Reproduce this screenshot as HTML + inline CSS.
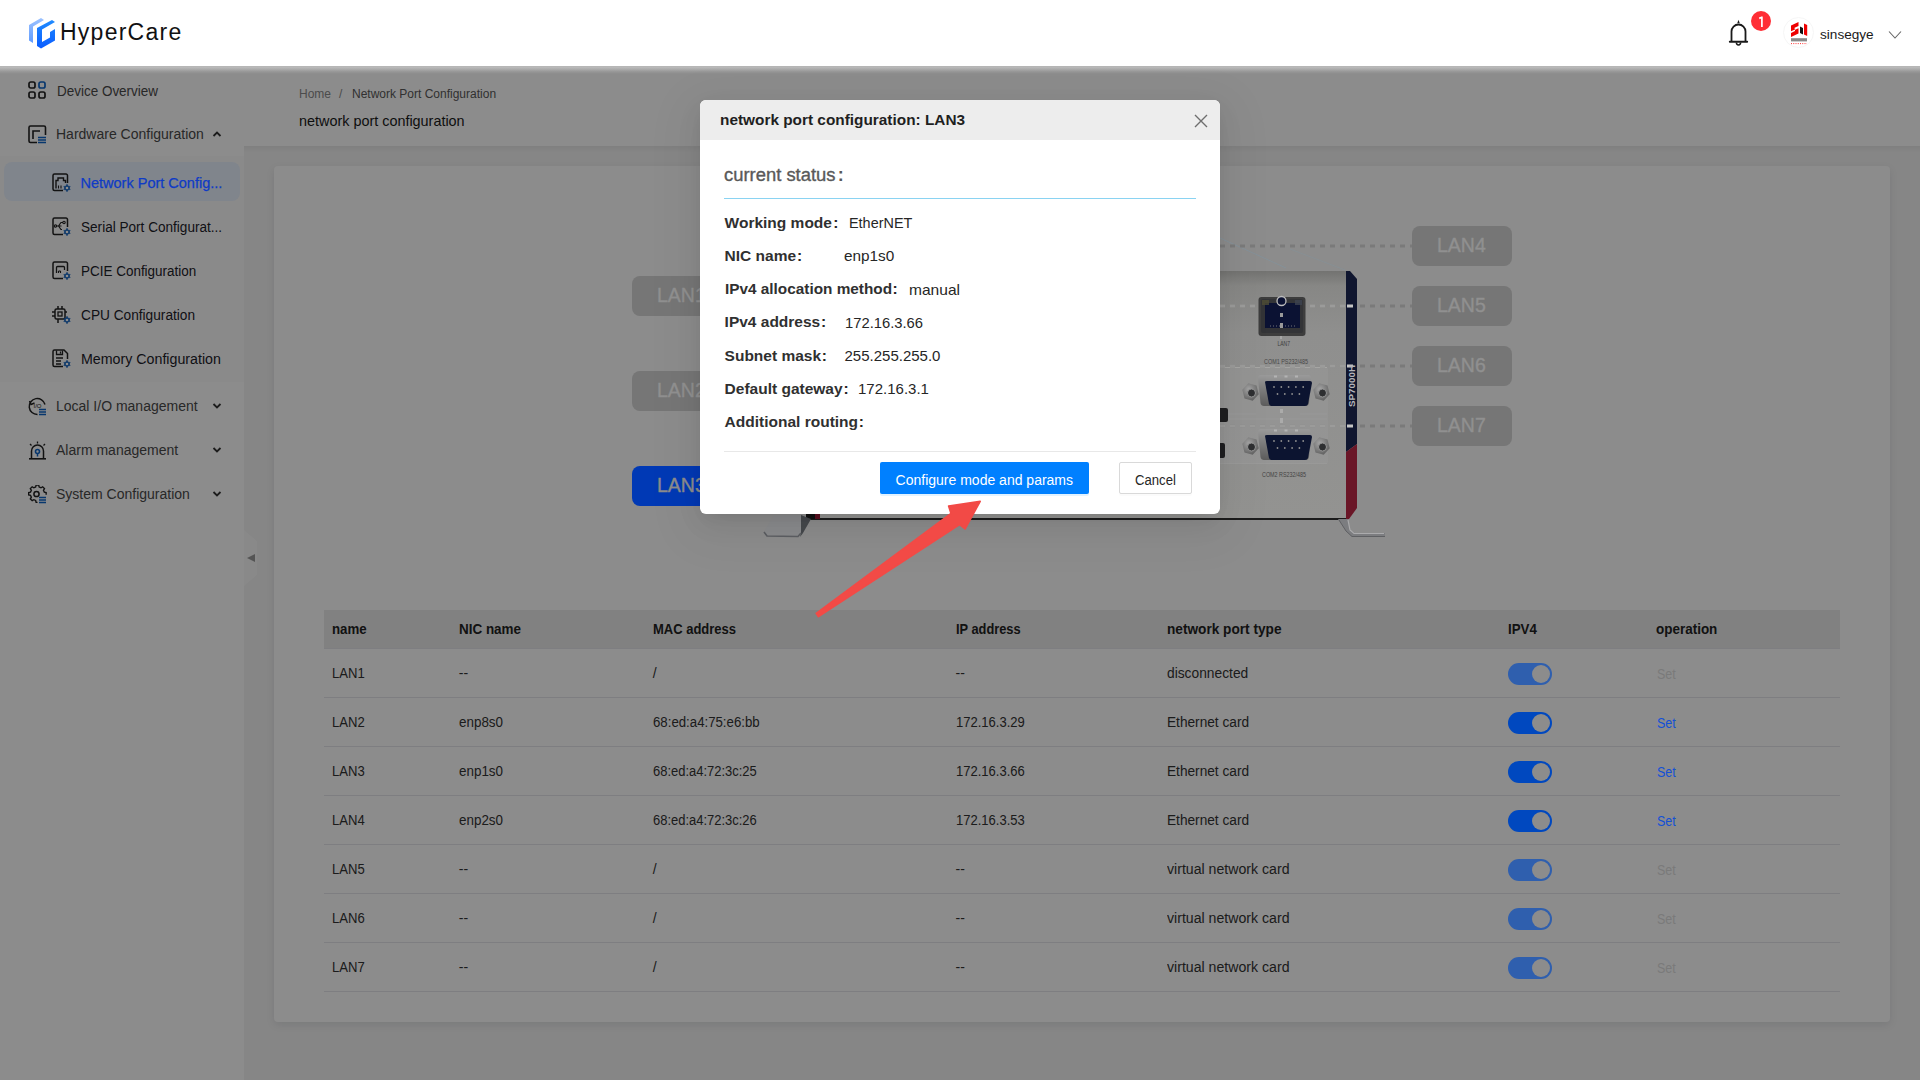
<!DOCTYPE html>
<html>
<head>
<meta charset="utf-8">
<style>
*{margin:0;padding:0;box-sizing:border-box;}
html,body{width:1920px;height:1080px;overflow:hidden;}
body{position:relative;font-family:"Liberation Sans",sans-serif;background:#f4f4f4;color:#303133;}
.abs{position:absolute;}
.t{position:absolute;white-space:nowrap;line-height:1;}
/* header */
#hdr{position:absolute;left:0;top:0;width:1920px;height:66px;background:#fff;z-index:20;}
/* sidebar */
#side{position:absolute;left:0;top:66px;width:244px;height:1014px;background:#fff;}
#sub{position:absolute;left:0;top:156px;width:244px;height:226px;background:#fcfcfc;}
#sel{position:absolute;left:4px;top:162px;width:236px;height:39px;background:#eaf2ff;border-radius:8px;}
.mi{position:absolute;font-size:14px;color:#4a4a4a;white-space:nowrap;line-height:1;}
.si{position:absolute;font-size:14px;color:#1d2129;white-space:nowrap;line-height:1;}
/* page header */
#ph{position:absolute;left:244px;top:66px;width:1676px;height:80px;background:#fff;}
/* card */
#card{position:absolute;left:274px;top:166px;width:1616px;height:856px;background:#fff;border-radius:4px;box-shadow:0 3px 8px rgba(0,20,40,0.09);}
/* table */
.th{position:absolute;font-size:14px;font-weight:700;color:#1d2129;white-space:nowrap;line-height:1;}
.td{position:absolute;font-size:14px;color:#1d2129;white-space:nowrap;line-height:1;}
.rowline{position:absolute;left:324px;width:1516px;height:1px;background:#e5e6eb;}
.tog{position:absolute;width:44px;height:22px;border-radius:11px;background:#165dff;}
.tog::after{content:"";position:absolute;right:2px;top:2px;width:18px;height:18px;border-radius:50%;background:#fff;}
.tog.dis{background:#6b98ff;}
.set{position:absolute;font-size:14px;color:#165dff;line-height:1;}
.set.dis{color:#c9cdd4;}
/* mask */
#mask{position:absolute;left:0;top:66px;width:1920px;height:1014px;background:rgba(0,0,0,0.45);z-index:10;}
/* modal */
#modal{position:absolute;left:700px;top:100px;width:520px;height:414px;background:#fff;border-radius:6px;z-index:30;overflow:hidden;box-shadow:0 6px 16px -8px rgba(0,0,0,0.1),0 9px 28px rgba(0,0,0,0.06),0 12px 48px 16px rgba(0,0,0,0.04);}
#mh{position:absolute;left:0;top:0;width:520px;height:40px;background:#ededed;}
.lb{position:absolute;font-size:15.5px;font-weight:700;color:#262626;white-space:nowrap;line-height:1;}
.vl{position:absolute;font-size:15px;color:#262626;white-space:nowrap;line-height:1;}
</style>
</head>
<body>
<!-- HEADER -->
<div id="hdr">
  <svg class="abs" style="left:28px;top:17px" width="28" height="32" viewBox="0 0 28 32">
    <defs>
      <linearGradient id="lg1" x1="0" y1="0" x2="0" y2="1"><stop offset="0" stop-color="#9cc2ff"/><stop offset="1" stop-color="#5f9bff"/></linearGradient>
      <linearGradient id="lg2" x1="0" y1="0" x2="0" y2="1"><stop offset="0" stop-color="#1f8bff"/><stop offset="1" stop-color="#0a5cff"/></linearGradient>
    </defs>
    <polygon points="1,8 13,1 16,3 5,9.5 5,26 1,23.5" fill="url(#lg1)"/>
    <polygon points="9,11 24,3 27,5 14,12.5 14,25 22,20.5 22,15 27,12 27,23.5 13,31.5 9,29" fill="url(#lg2)"/>
  </svg>
  <div class="t" style="left:60px;top:20.5px;font-size:23px;letter-spacing:1.25px;color:#111;">HyperCare</div>
  <svg class="abs" style="left:1728px;top:19px" width="22" height="28" viewBox="0 0 22 28" fill="none">
    <path d="M9.2 4.2L10.5 0.8L11.8 4.2Z" fill="#1a1a1a"/>
    <path d="M3.5 22.5V12.5a7 7 0 0 1 14 0V22.5" stroke="#1a1a1a" stroke-width="1.8"/>
    <path d="M1.8 22.8h17.4" stroke="#1a1a1a" stroke-width="1.9" stroke-linecap="round"/>
    <path d="M8.4 23.6a2.1 2.4 0 0 0 4.2 0" stroke="#1a1a1a" stroke-width="1.5"/>
  </svg>
  <div class="abs" style="left:1751px;top:11px;width:20px;height:20px;border-radius:50%;background:#ff2e35;"></div>
  <svg class="abs" style="left:1751px;top:11px" width="20" height="20" viewBox="0 0 20 20"><path d="M8.2 7.4L10.9 6.2V15.9" stroke="#fff" stroke-width="1.7" fill="none" stroke-linejoin="round"/></svg>
  <div class="abs" style="left:1783px;top:17px;width:31px;height:31px;border-radius:50%;border:1px solid #f6f6f6;background:#fff;"></div>
  <svg class="abs" style="left:1783px;top:17px" width="32" height="32" viewBox="1783 17 32 32">
    <path d="M1791 25.5L1798.5 22V26L1794.6 27.8V30L1798.5 28.2V33.5L1791 37V33L1795 31.1V29.4L1791 31.3Z" fill="#ee0000"/>
    <path d="M1800 26.5L1803 28V34.6L1800 33Z" fill="#111"/>
    <path d="M1804 23.5L1807.2 25V36L1804 34.5Z" fill="#ee0000"/>
    <rect x="1791" y="38.2" width="16" height="3.2" fill="#555" opacity="0.7"/>
    <path d="M1791 43.6H1807" stroke="#f33" stroke-width="1" stroke-dasharray="1 1.25"/>
  </svg>
  <div class="t" style="left:1820px;top:28px;font-size:13.6px;color:#1a1a1a;">sinsegye</div>
  <svg class="abs" style="left:1888px;top:30px" width="14" height="10" viewBox="0 0 14 10" fill="none"><path d="M1 1.5L7 8L13 1.5" stroke="#666" stroke-width="1.1"/></svg>
</div>
<div class="abs" style="left:0;top:66px;width:1920px;height:8px;z-index:21;background:linear-gradient(to bottom,rgba(255,255,255,0.36) 0%,rgba(255,255,255,0.38) 20%,rgba(255,255,255,0.1) 70%,rgba(255,255,255,0));"></div>

<!-- SIDEBAR -->
<div id="side"></div>
<div id="sub"></div>
<div id="sel"></div>
<!-- icons top-level -->
<svg class="abs" style="left:28px;top:81px" width="18" height="18" viewBox="0 0 18 18" fill="none" stroke-width="1.7">
  <rect x="1" y="1" width="6" height="6" rx="1.8" stroke="#222"/>
  <rect x="11" y="1" width="6" height="6" rx="1.8" stroke="#0e64c8"/>
  <rect x="1" y="11" width="6" height="6" rx="1.8" stroke="#222"/>
  <rect x="11" y="11" width="6" height="6" rx="1.8" stroke="#222"/>
</svg>
<div class="mi" style="left:56.5px;top:83.5px;transform:scaleX(0.962);transform-origin:0 0;">Device Overview</div>

<svg class="abs" style="left:28px;top:125px" width="19" height="19" viewBox="0 0 19 19" fill="none" stroke-width="1.6">
  <path d="M9 17.5H2.5a1.5 1.5 0 0 1-1.5-1.5V2.5A1.5 1.5 0 0 1 2.5 1H16a1.5 1.5 0 0 1 1.5 1.5V10" stroke="#222"/>
  <path d="M5 14V6h7" stroke="#222"/>
  <path d="M10 12.5h8M10 15h8M10 17.5h8" stroke="#0e64c8" stroke-width="1.3"/>
</svg>
<div class="mi" style="left:56px;top:127px;">Hardware Configuration</div>
<svg class="abs" style="left:212px;top:130px" width="10" height="8" viewBox="0 0 10 8" fill="none"><path d="M1.5 6L5 2.5L8.5 6" stroke="#333" stroke-width="1.8"/></svg>

<!-- sub icons -->
<svg class="abs" style="left:52px;top:173px" width="19" height="19" viewBox="0 0 19 19" fill="none" stroke-width="1.5">
  <path d="M11 17.5H2.5a1.5 1.5 0 0 1-1.5-1.5V2.5A1.5 1.5 0 0 1 2.5 1H14a1.5 1.5 0 0 1 1.5 1.5V10" stroke="#222"/>
  <path d="M4 15.5V7.5h2V5h5.5v2.5h2V10" stroke="#222" stroke-width="1.4"/>
  <path d="M6.5 15.5v-3M9 15.5v-3" stroke="#222" stroke-width="1.1"/>
  <path d="M15 11.2L18.2 16.6H11.8Z M15 18.8L11.8 13.4H18.2Z" fill="#1565c0" stroke="#1565c0" stroke-width="0.6" stroke-linejoin="round"/><circle cx="15" cy="15" r="1.3" fill="#fff"/>
</svg>
<div class="si" style="left:80.5px;top:175.5px;color:#0e3bc6;font-size:14.5px;z-index:11;-webkit-text-stroke:0.25px #0e3bc6;">Network Port Config...</div>

<svg class="abs" style="left:52px;top:217px" width="19" height="19" viewBox="0 0 19 19" fill="none" stroke-width="1.5">
  <path d="M11 17.5H2.5a1.5 1.5 0 0 1-1.5-1.5V2.5A1.5 1.5 0 0 1 2.5 1H14a1.5 1.5 0 0 1 1.5 1.5V10" stroke="#222"/>
  <path d="M3.5 9h6M6.5 9l2.5-3.5h2M6.5 9l2.5 3.5h1" stroke="#222" stroke-width="1.2"/>
  <circle cx="3.5" cy="9" r="1.2" stroke="#222" stroke-width="1.1"/><circle cx="12" cy="5.5" r="1.2" stroke="#222" stroke-width="1.1"/>
  <path d="M15 11.2L18.2 16.6H11.8Z M15 18.8L11.8 13.4H18.2Z" fill="#1565c0" stroke="#1565c0" stroke-width="0.6" stroke-linejoin="round"/><circle cx="15" cy="15" r="1.3" fill="#fff"/>
</svg>
<div class="si" style="left:80.5px;top:220px;transform:scaleX(0.97);transform-origin:0 0;">Serial Port Configurat...</div>

<svg class="abs" style="left:52px;top:261px" width="19" height="19" viewBox="0 0 19 19" fill="none" stroke-width="1.5">
  <path d="M11 17.5H2.5a1.5 1.5 0 0 1-1.5-1.5V2.5A1.5 1.5 0 0 1 2.5 1H14a1.5 1.5 0 0 1 1.5 1.5V10" stroke="#222"/>
  <path d="M4.5 12V6.5a1 1 0 0 1 1-1h6a1 1 0 0 1 1 1V9" stroke="#222" stroke-width="1.3"/>
  <path d="M6.5 10v2M8.5 10v2M6.5 10h2" stroke="#222" stroke-width="1.1"/>
  <path d="M15 11.2L18.2 16.6H11.8Z M15 18.8L11.8 13.4H18.2Z" fill="#1565c0" stroke="#1565c0" stroke-width="0.6" stroke-linejoin="round"/><circle cx="15" cy="15" r="1.3" fill="#fff"/>
</svg>
<div class="si" style="left:80.5px;top:264px;transform:scaleX(0.962);transform-origin:0 0;">PCIE Configuration</div>

<svg class="abs" style="left:51px;top:305px" width="20" height="19" viewBox="0 0 20 19" fill="none" stroke-width="1.5">
  <rect x="4" y="4" width="10" height="10" rx="1.5" stroke="#222"/>
  <rect x="7" y="7" width="4" height="4" stroke="#222" stroke-width="1.3"/>
  <path d="M7 1v3M11 1v3M7 14v4M1 7h3M1 11h3M14 7h2" stroke="#222"/>
  <path d="M16 11.2L19.2 16.6H12.8Z M16 18.8L12.8 13.4H19.2Z" fill="#1565c0" stroke="#1565c0" stroke-width="0.6" stroke-linejoin="round"/><circle cx="16" cy="15" r="1.3" fill="#fff"/>
</svg>
<div class="si" style="left:80.5px;top:308px;transform:scaleX(0.977);transform-origin:0 0;">CPU Configuration</div>

<svg class="abs" style="left:52px;top:349px" width="19" height="19" viewBox="0 0 19 19" fill="none" stroke-width="1.5">
  <path d="M11 17.5H2.5a1.5 1.5 0 0 1-1.5-1.5V2.5A1.5 1.5 0 0 1 2.5 1H12l3.5 3.5V10" stroke="#222"/>
  <path d="M4.5 1.5v4h6v-4M8.5 2.5v2M4 9h7M4 12h5M4 15h5" stroke="#222" stroke-width="1.3"/>
  <path d="M15 11.2L18.2 16.6H11.8Z M15 18.8L11.8 13.4H18.2Z" fill="#1565c0" stroke="#1565c0" stroke-width="0.6" stroke-linejoin="round"/><circle cx="15" cy="15" r="1.3" fill="#fff"/>
</svg>
<div class="si" style="left:80.5px;top:352px;transform:scaleX(1.016);transform-origin:0 0;">Memory Configuration</div>

<!-- more top-level -->
<svg class="abs" style="left:28px;top:397px" width="19" height="19" viewBox="0 0 19 19" fill="none" stroke-width="1.5">
  <path d="M17 7.5A8 8 0 1 0 9.5 17.5" stroke="#222"/>
  <path d="M1.5 4l1.5 3.5L6.5 6" stroke="#222" stroke-width="1.4"/>
  <text x="5.5" y="10.5" font-size="6" font-family="Liberation Sans" fill="#222">I/O</text>
  <path d="M11 12.5h7M11 15h7M11 17.5h7" stroke="#0e64c8" stroke-width="1.3"/>
</svg>
<div class="mi" style="left:56px;top:399px;">Local I/O management</div>
<svg class="abs" style="left:212px;top:402px" width="10" height="8" viewBox="0 0 10 8" fill="none"><path d="M1.5 2L5 5.5L8.5 2" stroke="#333" stroke-width="1.8"/></svg>

<svg class="abs" style="left:28px;top:441px" width="19" height="19" viewBox="0 0 19 19" fill="none" stroke-width="1.5">
  <path d="M3.5 17.5V10a6 6 0 0 1 12 0v7.5" stroke="#222"/>
  <path d="M1 17.8h17" stroke="#222" stroke-width="1.6"/>
  <path d="M9.5 0.5v2M2 3l1.5 1.5M17 3l-1.5 1.5" stroke="#222" stroke-width="1.3"/>
  <circle cx="9.5" cy="10.5" r="2" stroke="#0e64c8" stroke-width="1.6"/>
  <path d="M9.5 12.5v3" stroke="#0e64c8" stroke-width="1.5"/>
</svg>
<div class="mi" style="left:56px;top:443px;">Alarm management</div>
<svg class="abs" style="left:212px;top:446px" width="10" height="8" viewBox="0 0 10 8" fill="none"><path d="M1.5 2L5 5.5L8.5 2" stroke="#333" stroke-width="1.8"/></svg>

<svg class="abs" style="left:28px;top:485px" width="19" height="19" viewBox="0 0 19 19" fill="none" stroke-width="1.5">
  <path d="M10 17.2a8 8 0 0 1-1.5 0l-.5-2-2-.9-1.8 1.1-2-2 1.1-1.8-.9-2-2-.5V6.6l2-.5.9-2L2.2 2.3l2-2 1.8 1.1 2-.9.5-2h2.8l.5 2 2 .9 1.8-1.1 2 2-1.1 1.8.9 2 2 .5V9" stroke="#222" transform="translate(0.3,1.5) scale(0.92)"/>
  <circle cx="8.5" cy="9" r="2.6" stroke="#222"/>
  <path d="M11 12.5h7M11 15h7M11 17.5h7" stroke="#0e64c8" stroke-width="1.3"/>
</svg>
<div class="mi" style="left:56px;top:487px;">System Configuration</div>
<svg class="abs" style="left:212px;top:490px" width="10" height="8" viewBox="0 0 10 8" fill="none"><path d="M1.5 2L5 5.5L8.5 2" stroke="#333" stroke-width="1.8"/></svg>

<!-- collapse trigger -->
<div class="abs" style="left:244px;top:530px;width:13px;height:56px;background:rgba(255,255,255,0.5);clip-path:polygon(0 0,100% 20%,100% 80%,0 100%);"></div>
<div class="abs" style="left:247px;top:554px;width:0;height:0;border-top:4px solid transparent;border-bottom:4px solid transparent;border-right:8px solid #9a9a9a;"></div>

<!-- PAGE HEADER -->
<div id="ph"></div>
<div class="abs" style="left:244px;top:146px;width:1676px;height:6px;background:linear-gradient(to bottom,rgba(0,0,0,0.05),rgba(0,0,0,0));"></div>
<div class="t" style="left:299px;top:88px;font-size:12px;color:#8a8a8a;">Home</div>
<div class="t" style="left:339px;top:88px;font-size:12px;color:#8a8a8a;">/</div>
<div class="t" style="left:352px;top:88px;font-size:12px;color:#595959;">Network Port Configuration</div>
<div class="t" style="left:299px;top:114px;font-size:14.4px;color:#1a1a1a;">network port configuration</div>

<!-- CARD -->
<div id="card"></div>
<svg class="abs" style="left:0;top:0;z-index:11" width="1920" height="1080" viewBox="0 0 1920 1080">
<defs>
<linearGradient id="pnl" x1="0" y1="0" x2="0" y2="1">
 <stop offset="0" stop-color="#737371"/><stop offset="0.06" stop-color="#878785"/><stop offset="0.25" stop-color="#8f8f8e"/><stop offset="1" stop-color="#939391"/>
</linearGradient>
<linearGradient id="shell" x1="0" y1="0" x2="0" y2="1"><stop offset="0" stop-color="#9a9a9a"/><stop offset="1" stop-color="#5c5c5c"/></linearGradient>
<radialGradient id="hex" cx="0.4" cy="0.35" r="0.7"><stop offset="0" stop-color="#a5a5a5"/><stop offset="1" stop-color="#5e5e5e"/></radialGradient>
</defs>
<path d="M1220 238 L1286 268" stroke="#7f97a6" stroke-width="0.8" opacity="0.6"/>
<path d="M1290 249 L1345 270" stroke="#7f97a6" stroke-width="0.6" opacity="0.5"/>
<rect x="808" y="271" width="538" height="248" fill="url(#pnl)"/>
<rect x="1180" y="367" width="148" height="97" rx="2" fill="#9a9a98" opacity="0.45"/>
<path d="M1180 367.5 H1327" stroke="#a6a6a4" stroke-width="1"/>
<path d="M1228 414 H1256 M1300 414 H1327 M1228 419 H1327" stroke="#a0a09e" stroke-width="0.8" opacity="0.6"/>
<path d="M1180 463.5 H1327" stroke="#9c9c9a" stroke-width="1" opacity="0.7"/>
<path d="M1220 246 H1412" stroke="#7a7a7a" stroke-width="3" stroke-dasharray="5 5"/>
<path d="M1220 306 H1412" stroke="#7a7a7a" stroke-width="3" stroke-dasharray="5 5"/>
<path d="M1220 366 H1412" stroke="#7a7a7a" stroke-width="3" stroke-dasharray="5 5"/>
<path d="M1220 426 H1412" stroke="#7a7a7a" stroke-width="3" stroke-dasharray="5 5"/>
<path d="M1220 306 H1346" stroke="#aaaaa8" stroke-width="3" stroke-dasharray="5 5" opacity="0.7"/>
<path d="M1220 366 H1346" stroke="#aaaaa8" stroke-width="3" stroke-dasharray="5 5" opacity="0.7"/>
<path d="M1220 426 H1346" stroke="#aaaaa8" stroke-width="3" stroke-dasharray="5 5" opacity="0.7"/>
<rect x="1280" y="409" width="3" height="4" fill="#b0b0b0" opacity="0.8"/>
<rect x="1280" y="418" width="3" height="5" fill="#b0b0b0" opacity="0.8"/>
<rect x="1280" y="336" width="2" height="3" fill="#b0b0b0" opacity="0.7"/>
<path d="M1346 271 L1350 271 L1357 279 L1357 444 L1346 452 Z" fill="#10162f"/>
<path d="M1346 452 L1357 444 L1357 508 L1349 519 L1346 519 Z" fill="#6a1627"/>
<rect x="1347" y="304.5" width="6" height="3" fill="#c4c4c4"/>
<rect x="1347" y="364.5" width="6" height="3" fill="#c4c4c4"/>
<rect x="1347" y="424.5" width="6" height="3" fill="#c4c4c4"/>
<text transform="translate(1355,407) rotate(-90)" font-family="Liberation Sans" font-weight="700" font-size="9" fill="#b5b5ba" textLength="42" lengthAdjust="spacingAndGlyphs">SP7000H</text>
<rect x="806" y="518" width="540" height="2" fill="#1c1c1c"/>
<rect x="806" y="514" width="12" height="5" fill="#121212"/>
<rect x="815" y="514" width="5" height="5" fill="#5a1020"/>
<path d="M774 515 L801 514.5 L801 533 L798 537 L767 537 L764 532 Z" fill="#8a8b8d"/>
<path d="M801 515 L811 519 L803 533 L800 537 L801 533 Z" fill="#45484c"/>
<path d="M764 532 L767 536 L798 536.5 L801 533" stroke="#5c5e62" stroke-width="1.6" fill="none"/>
<path d="M1338 519 L1348 519 L1350 530 L1355 533 L1385 533 L1385 537 L1352 537 L1346 531 Z" fill="#7c7d80"/>
<path d="M1348 520 L1350 530 L1354 533.5 L1384 533.5" stroke="#ababad" stroke-width="1.2" fill="none"/>
<path d="M1339 520 L1346 531 L1352 536.5 L1385 536.5" stroke="#5f6063" stroke-width="1" fill="none"/>
<rect x="1258.5" y="297" width="47" height="39" rx="3" fill="#3d3d3d"/>
<rect x="1261" y="299" width="42" height="34" rx="2" fill="#333437"/>
<rect x="1265" y="303" width="35" height="25" fill="#0b1233"/>
<rect x="1262" y="300" width="7" height="5" fill="#4f4d34" opacity="0.8"/>
<rect x="1295" y="300" width="7" height="5" fill="#3d4350" opacity="0.8"/>
<circle cx="1281.5" cy="301" r="4.5" fill="#0b1233" stroke="#bdbdbd" stroke-width="1.3"/>
<rect x="1280" y="313" width="3" height="4" fill="#9a9a9a"/>
<path d="M1270 326 H1296" stroke="#8a8a8a" stroke-width="0.8" stroke-dasharray="1 2"/>
<rect x="1280" y="323" width="3" height="5" fill="#9a9a9a"/>
<text x="1277.5" y="346" font-family="Liberation Sans" font-size="6.5" fill="#3e3e3e" textLength="12.5" lengthAdjust="spacingAndGlyphs">LAN7</text>
<text x="1264" y="363.5" font-family="Liberation Sans" font-size="6.5" fill="#484848" textLength="44" lengthAdjust="spacingAndGlyphs">COM1 PS232/485</text>
<text x="1262" y="476.5" font-family="Liberation Sans" font-size="6.5" fill="#444" textLength="44" lengthAdjust="spacingAndGlyphs">COM2 RS232/485</text>
<path d="M1258 378 Q1258 375 1261 375 H1308 Q1311 375 1311 378 L1309 403 Q1308.5 406 1305 406 H1264 Q1261 406 1260.5 403 Z" fill="url(#shell)"/>
<path d="M1265 382 Q1265 381 1267 381 H1310 Q1312 381 1312 383 L1308 404 Q1307.5 406 1305 406 H1272 Q1269.5 406 1269 404 Z" fill="#0c1430"/>
<rect x="1274.0" y="375.5" width="3" height="2" fill="#c0c0c0" opacity="0.7"/>
<rect x="1284.5" y="375.5" width="3" height="2" fill="#c0c0c0" opacity="0.7"/>
<rect x="1295.0" y="375.5" width="3" height="2" fill="#c0c0c0" opacity="0.7"/>
<circle cx="1274.0" cy="387" r="0.9" fill="#8f8f8f"/>
<circle cx="1281.3" cy="387" r="0.9" fill="#8f8f8f"/>
<circle cx="1288.6" cy="387" r="0.9" fill="#8f8f8f"/>
<circle cx="1295.9" cy="387" r="0.9" fill="#8f8f8f"/>
<circle cx="1303.2" cy="387" r="0.9" fill="#8f8f8f"/>
<circle cx="1277.5" cy="394" r="0.9" fill="#8f8f8f"/>
<circle cx="1284.8" cy="394" r="0.9" fill="#8f8f8f"/>
<circle cx="1292.1" cy="394" r="0.9" fill="#8f8f8f"/>
<circle cx="1299.4" cy="394" r="0.9" fill="#8f8f8f"/>
<polygon points="1258.7,394.3 1252.7,400.7 1244.5,398.4 1242.3,389.7 1248.3,383.3 1256.5,385.6" fill="url(#hex)"/>
<circle cx="1251.5" cy="393" r="4" fill="#2e2f31"/>
<circle cx="1251.5" cy="393" r="4" fill="none" stroke="#9c9c9c" stroke-width="0.9"/>
<polygon points="1329.7,394.3 1323.7,400.7 1315.5,398.4 1313.3,389.7 1319.3,383.3 1327.5,385.6" fill="url(#hex)"/>
<circle cx="1322.5" cy="393" r="4" fill="#2e2f31"/>
<circle cx="1322.5" cy="393" r="4" fill="none" stroke="#9c9c9c" stroke-width="0.9"/>
<path d="M1258 432 Q1258 429 1261 429 H1308 Q1311 429 1311 432 L1309 457 Q1308.5 460 1305 460 H1264 Q1261 460 1260.5 457 Z" fill="url(#shell)"/>
<path d="M1265 436 Q1265 435 1267 435 H1310 Q1312 435 1312 437 L1308 458 Q1307.5 460 1305 460 H1272 Q1269.5 460 1269 458 Z" fill="#0c1430"/>
<rect x="1274.0" y="429.5" width="3" height="2" fill="#c0c0c0" opacity="0.7"/>
<rect x="1284.5" y="429.5" width="3" height="2" fill="#c0c0c0" opacity="0.7"/>
<rect x="1295.0" y="429.5" width="3" height="2" fill="#c0c0c0" opacity="0.7"/>
<circle cx="1274.0" cy="441" r="0.9" fill="#8f8f8f"/>
<circle cx="1281.3" cy="441" r="0.9" fill="#8f8f8f"/>
<circle cx="1288.6" cy="441" r="0.9" fill="#8f8f8f"/>
<circle cx="1295.9" cy="441" r="0.9" fill="#8f8f8f"/>
<circle cx="1303.2" cy="441" r="0.9" fill="#8f8f8f"/>
<circle cx="1277.5" cy="448" r="0.9" fill="#8f8f8f"/>
<circle cx="1284.8" cy="448" r="0.9" fill="#8f8f8f"/>
<circle cx="1292.1" cy="448" r="0.9" fill="#8f8f8f"/>
<circle cx="1299.4" cy="448" r="0.9" fill="#8f8f8f"/>
<polygon points="1258.7,448.3 1252.7,454.7 1244.5,452.4 1242.3,443.7 1248.3,437.3 1256.5,439.6" fill="url(#hex)"/>
<circle cx="1251.5" cy="447" r="4" fill="#2e2f31"/>
<circle cx="1251.5" cy="447" r="4" fill="none" stroke="#9c9c9c" stroke-width="0.9"/>
<polygon points="1329.7,448.3 1323.7,454.7 1315.5,452.4 1313.3,443.7 1319.3,437.3 1327.5,439.6" fill="url(#hex)"/>
<circle cx="1322.5" cy="447" r="4" fill="#2e2f31"/>
<circle cx="1322.5" cy="447" r="4" fill="none" stroke="#9c9c9c" stroke-width="0.9"/>
<rect x="1216" y="408" width="12" height="14" rx="2" fill="#1e1e20"/>
<rect x="1216" y="443" width="9" height="15" rx="2" fill="#1e1e20"/>
<rect x="1412" y="226" width="100" height="40" rx="8" fill="#767676"/>
<rect x="1412" y="286" width="100" height="40" rx="8" fill="#767676"/>
<rect x="1412" y="346" width="100" height="40" rx="8" fill="#767676"/>
<rect x="1412" y="406" width="100" height="40" rx="8" fill="#767676"/>
<rect x="632" y="276" width="100" height="40" rx="8" fill="#767676"/>
<rect x="632" y="371" width="100" height="40" rx="8" fill="#767676"/>
<rect x="632" y="466" width="100" height="40" rx="8" fill="#0039b5"/>
</svg>
<div class="t" style="left:1437.30px;top:235.29px;font-size:20px;color:#909090;transform:scaleX(0.9740);transform-origin:0 0;z-index:11;-webkit-text-stroke:0.4px #909090;">LAN4</div>
<div class="t" style="left:1437.30px;top:295.29px;font-size:20px;color:#909090;transform:scaleX(0.9740);transform-origin:0 0;z-index:11;-webkit-text-stroke:0.4px #909090;">LAN5</div>
<div class="t" style="left:1437.30px;top:355.29px;font-size:20px;color:#909090;transform:scaleX(0.9740);transform-origin:0 0;z-index:11;-webkit-text-stroke:0.4px #909090;">LAN6</div>
<div class="t" style="left:1437.30px;top:415.29px;font-size:20px;color:#909090;transform:scaleX(0.9740);transform-origin:0 0;z-index:11;-webkit-text-stroke:0.4px #909090;">LAN7</div>
<div class="t" style="left:657.00px;top:285.29px;font-size:20px;color:#909090;transform:scaleX(0.9740);transform-origin:0 0;z-index:11;-webkit-text-stroke:0.4px #909090;">LAN1</div>
<div class="t" style="left:657.00px;top:380.29px;font-size:20px;color:#909090;transform:scaleX(0.9740);transform-origin:0 0;z-index:11;-webkit-text-stroke:0.4px #909090;">LAN2</div>
<div class="t" style="left:657.00px;top:475.29px;font-size:20px;color:#8c8c8c;transform:scaleX(0.9740);transform-origin:0 0;z-index:11;-webkit-text-stroke:0.4px #8c8c8c;">LAN3</div>

<div class="abs" style="left:324px;top:610px;width:1516px;height:38px;background:#ebebeb;"></div>
<div class="rowline" style="top:648px;"></div>
<div class="t" style="left:332.40px;top:622.37px;font-size:14px;color:#222;font-weight:700;transform:scaleX(0.9469);transform-origin:0 0;">name</div>
<div class="t" style="left:458.80px;top:622.37px;font-size:14px;color:#222;font-weight:700;transform:scaleX(0.9606);transform-origin:0 0;">NIC name</div>
<div class="t" style="left:652.70px;top:622.37px;font-size:14px;color:#222;font-weight:700;transform:scaleX(0.9278);transform-origin:0 0;">MAC address</div>
<div class="t" style="left:955.60px;top:622.37px;font-size:14px;color:#222;font-weight:700;transform:scaleX(0.9155);transform-origin:0 0;">IP address</div>
<div class="t" style="left:1166.60px;top:622.37px;font-size:14px;color:#222;font-weight:700;transform:scaleX(0.9748);transform-origin:0 0;">network port type</div>
<div class="t" style="left:1508.20px;top:622.37px;font-size:14px;color:#222;font-weight:700;transform:scaleX(0.9513);transform-origin:0 0;">IPV4</div>
<div class="t" style="left:1655.80px;top:622.37px;font-size:14px;color:#222;font-weight:700;transform:scaleX(0.9618);transform-origin:0 0;">operation</div>
<div class="t" style="left:332.40px;top:665.87px;font-size:14px;color:#333;transform:scaleX(0.9343);transform-origin:0 0;">LAN1</div>
<div class="t" style="left:458.80px;top:665.87px;font-size:14px;color:#333;">--</div>
<div class="t" style="left:652.70px;top:665.87px;font-size:14px;color:#333;">/</div>
<div class="t" style="left:955.60px;top:665.87px;font-size:14px;color:#333;">--</div>
<div class="t" style="left:1166.60px;top:665.87px;font-size:14px;color:#333;transform:scaleX(0.9847);transform-origin:0 0;">disconnected</div>
<div class="rowline" style="top:697px;"></div>
<div class="t" style="left:332.40px;top:714.87px;font-size:14px;color:#333;transform:scaleX(0.9343);transform-origin:0 0;">LAN2</div>
<div class="t" style="left:458.80px;top:714.87px;font-size:14px;color:#333;transform:scaleX(0.9582);transform-origin:0 0;">enp8s0</div>
<div class="t" style="left:652.70px;top:714.87px;font-size:14px;color:#333;transform:scaleX(0.9447);transform-origin:0 0;">68:ed:a4:75:e6:bb</div>
<div class="t" style="left:955.60px;top:714.87px;font-size:14px;color:#333;transform:scaleX(0.9294);transform-origin:0 0;">172.16.3.29</div>
<div class="t" style="left:1166.60px;top:714.87px;font-size:14px;color:#333;transform:scaleX(0.9762);transform-origin:0 0;">Ethernet card</div>
<div class="rowline" style="top:746px;"></div>
<div class="t" style="left:332.40px;top:763.87px;font-size:14px;color:#333;transform:scaleX(0.9343);transform-origin:0 0;">LAN3</div>
<div class="t" style="left:458.80px;top:763.87px;font-size:14px;color:#333;transform:scaleX(0.9582);transform-origin:0 0;">enp1s0</div>
<div class="t" style="left:652.70px;top:763.87px;font-size:14px;color:#333;transform:scaleX(0.9256);transform-origin:0 0;">68:ed:a4:72:3c:25</div>
<div class="t" style="left:955.60px;top:763.87px;font-size:14px;color:#333;transform:scaleX(0.9294);transform-origin:0 0;">172.16.3.66</div>
<div class="t" style="left:1166.60px;top:763.87px;font-size:14px;color:#333;transform:scaleX(0.9762);transform-origin:0 0;">Ethernet card</div>
<div class="rowline" style="top:795px;"></div>
<div class="t" style="left:332.40px;top:812.87px;font-size:14px;color:#333;transform:scaleX(0.9343);transform-origin:0 0;">LAN4</div>
<div class="t" style="left:458.80px;top:812.87px;font-size:14px;color:#333;transform:scaleX(0.9582);transform-origin:0 0;">enp2s0</div>
<div class="t" style="left:652.70px;top:812.87px;font-size:14px;color:#333;transform:scaleX(0.9256);transform-origin:0 0;">68:ed:a4:72:3c:26</div>
<div class="t" style="left:955.60px;top:812.87px;font-size:14px;color:#333;transform:scaleX(0.9294);transform-origin:0 0;">172.16.3.53</div>
<div class="t" style="left:1166.60px;top:812.87px;font-size:14px;color:#333;transform:scaleX(0.9762);transform-origin:0 0;">Ethernet card</div>
<div class="rowline" style="top:844px;"></div>
<div class="t" style="left:332.40px;top:861.87px;font-size:14px;color:#333;transform:scaleX(0.9343);transform-origin:0 0;">LAN5</div>
<div class="t" style="left:458.80px;top:861.87px;font-size:14px;color:#333;">--</div>
<div class="t" style="left:652.70px;top:861.87px;font-size:14px;color:#333;">/</div>
<div class="t" style="left:955.60px;top:861.87px;font-size:14px;color:#333;">--</div>
<div class="t" style="left:1166.60px;top:861.87px;font-size:14px;color:#333;transform:scaleX(1.0092);transform-origin:0 0;">virtual network card</div>
<div class="rowline" style="top:893px;"></div>
<div class="t" style="left:332.40px;top:910.87px;font-size:14px;color:#333;transform:scaleX(0.9343);transform-origin:0 0;">LAN6</div>
<div class="t" style="left:458.80px;top:910.87px;font-size:14px;color:#333;">--</div>
<div class="t" style="left:652.70px;top:910.87px;font-size:14px;color:#333;">/</div>
<div class="t" style="left:955.60px;top:910.87px;font-size:14px;color:#333;">--</div>
<div class="t" style="left:1166.60px;top:910.87px;font-size:14px;color:#333;transform:scaleX(1.0092);transform-origin:0 0;">virtual network card</div>
<div class="rowline" style="top:942px;"></div>
<div class="t" style="left:332.40px;top:959.87px;font-size:14px;color:#333;transform:scaleX(0.9343);transform-origin:0 0;">LAN7</div>
<div class="t" style="left:458.80px;top:959.87px;font-size:14px;color:#333;">--</div>
<div class="t" style="left:652.70px;top:959.87px;font-size:14px;color:#333;">/</div>
<div class="t" style="left:955.60px;top:959.87px;font-size:14px;color:#333;">--</div>
<div class="t" style="left:1166.60px;top:959.87px;font-size:14px;color:#333;transform:scaleX(1.0092);transform-origin:0 0;">virtual network card</div>
<div class="rowline" style="top:991px;"></div>


<!-- MASK -->
<div id="mask"></div>
<div class="abs" style="left:1508px;top:663px;width:44px;height:22px;border-radius:11px;background:#2f5fae;z-index:11;"></div>
<div class="abs" style="left:1532px;top:665px;width:18px;height:18px;border-radius:50%;background:#8c8c8c;z-index:11;"></div>
<div class="t" style="left:1657.30px;top:667.37px;font-size:14px;color:#7a7a7a;transform:scaleX(0.8905);transform-origin:0 0;z-index:11;">Set</div>
<div class="abs" style="left:1508px;top:712px;width:44px;height:22px;border-radius:11px;background:#0048bf;z-index:11;"></div>
<div class="abs" style="left:1532px;top:714px;width:18px;height:18px;border-radius:50%;background:#8c8c8c;z-index:11;"></div>
<div class="t" style="left:1657.30px;top:716.37px;font-size:14px;color:#1350d6;transform:scaleX(0.8905);transform-origin:0 0;z-index:11;">Set</div>
<div class="abs" style="left:1508px;top:761px;width:44px;height:22px;border-radius:11px;background:#0048bf;z-index:11;"></div>
<div class="abs" style="left:1532px;top:763px;width:18px;height:18px;border-radius:50%;background:#8c8c8c;z-index:11;"></div>
<div class="t" style="left:1657.30px;top:765.37px;font-size:14px;color:#1350d6;transform:scaleX(0.8905);transform-origin:0 0;z-index:11;">Set</div>
<div class="abs" style="left:1508px;top:810px;width:44px;height:22px;border-radius:11px;background:#0048bf;z-index:11;"></div>
<div class="abs" style="left:1532px;top:812px;width:18px;height:18px;border-radius:50%;background:#8c8c8c;z-index:11;"></div>
<div class="t" style="left:1657.30px;top:814.37px;font-size:14px;color:#1350d6;transform:scaleX(0.8905);transform-origin:0 0;z-index:11;">Set</div>
<div class="abs" style="left:1508px;top:859px;width:44px;height:22px;border-radius:11px;background:#2f5fae;z-index:11;"></div>
<div class="abs" style="left:1532px;top:861px;width:18px;height:18px;border-radius:50%;background:#8c8c8c;z-index:11;"></div>
<div class="t" style="left:1657.30px;top:863.37px;font-size:14px;color:#7a7a7a;transform:scaleX(0.8905);transform-origin:0 0;z-index:11;">Set</div>
<div class="abs" style="left:1508px;top:908px;width:44px;height:22px;border-radius:11px;background:#2f5fae;z-index:11;"></div>
<div class="abs" style="left:1532px;top:910px;width:18px;height:18px;border-radius:50%;background:#8c8c8c;z-index:11;"></div>
<div class="t" style="left:1657.30px;top:912.37px;font-size:14px;color:#7a7a7a;transform:scaleX(0.8905);transform-origin:0 0;z-index:11;">Set</div>
<div class="abs" style="left:1508px;top:957px;width:44px;height:22px;border-radius:11px;background:#2f5fae;z-index:11;"></div>
<div class="abs" style="left:1532px;top:959px;width:18px;height:18px;border-radius:50%;background:#8c8c8c;z-index:11;"></div>
<div class="t" style="left:1657.30px;top:961.37px;font-size:14px;color:#7a7a7a;transform:scaleX(0.8905);transform-origin:0 0;z-index:11;">Set</div>


<!-- MODAL -->
<div id="modal">
  <div id="mh"></div>
<div class="t" style="left:20.30px;top:11.93px;font-size:15.5px;color:#1f1f1f;font-weight:700;transform:scaleX(0.9916);transform-origin:0 0;">network port configuration: LAN3</div>
<svg class="abs" style="left:494px;top:14px" width="14" height="14" viewBox="0 0 14 14"><path d="M1 1L13 13M13 1L1 13" stroke="#6e6e6e" stroke-width="1.4"/></svg>
<div class="t" style="left:24.40px;top:66.05px;font-size:18px;color:#595959;transform:scaleX(1.0222);transform-origin:0 0;-webkit-text-stroke:0.35px #595959;">current status</div>
<div class="t" style="left:137.80px;top:66.05px;font-size:18px;color:#595959;font-weight:700;">:</div>
<div class="abs" style="left:24px;top:98px;width:472px;height:1px;background:#8ad3f2;"></div>
<div class="t" style="left:24.60px;top:114.73px;font-size:15.5px;color:#303030;font-weight:700;">Working mode</div>
<div class="t" style="left:133.20px;top:114.73px;font-size:15.5px;color:#262626;font-weight:700;">:</div>
<div class="t" style="left:149.30px;top:115.14px;font-size:15px;color:#262626;transform:scaleX(0.9613);transform-origin:0 0;">EtherNET</div>
<div class="t" style="left:24.60px;top:147.93px;font-size:15.5px;color:#303030;font-weight:700;">NIC name</div>
<div class="t" style="left:96.89px;top:147.93px;font-size:15.5px;color:#262626;font-weight:700;">:</div>
<div class="t" style="left:144.40px;top:148.34px;font-size:15px;color:#262626;transform:scaleX(1.0224);transform-origin:0 0;">enp1s0</div>
<div class="t" style="left:24.60px;top:181.13px;font-size:15.5px;color:#303030;font-weight:700;transform:scaleX(0.9894);transform-origin:0 0;">IPv4 allocation method</div>
<div class="t" style="left:192.40px;top:181.13px;font-size:15.5px;color:#262626;font-weight:700;">:</div>
<div class="t" style="left:208.80px;top:181.54px;font-size:15px;color:#262626;transform:scaleX(1.0366);transform-origin:0 0;">manual</div>
<div class="t" style="left:24.60px;top:214.33px;font-size:15.5px;color:#303030;font-weight:700;">IPv4 address</div>
<div class="t" style="left:121.04px;top:214.33px;font-size:15.5px;color:#262626;font-weight:700;">:</div>
<div class="t" style="left:145.00px;top:214.74px;font-size:15px;color:#262626;transform:scaleX(0.9848);transform-origin:0 0;">172.16.3.66</div>
<div class="t" style="left:24.60px;top:247.53px;font-size:15.5px;color:#303030;font-weight:700;">Subnet mask</div>
<div class="t" style="left:121.87px;top:247.53px;font-size:15.5px;color:#262626;font-weight:700;">:</div>
<div class="t" style="left:144.50px;top:247.94px;font-size:15px;color:#262626;">255.255.255.0</div>
<div class="t" style="left:24.60px;top:280.73px;font-size:15.5px;color:#303030;font-weight:700;">Default gateway</div>
<div class="t" style="left:143.40px;top:280.73px;font-size:15.5px;color:#262626;font-weight:700;">:</div>
<div class="t" style="left:158.00px;top:281.14px;font-size:15px;color:#262626;">172.16.3.1</div>
<div class="t" style="left:24.60px;top:313.93px;font-size:15.5px;color:#303030;font-weight:700;">Additional routing</div>
<div class="t" style="left:158.84px;top:313.93px;font-size:15.5px;color:#262626;font-weight:700;">:</div>
<div class="abs" style="left:24px;top:351px;width:472px;height:1px;background:#e8e8e8;"></div>
<div class="abs" style="left:180px;top:362px;width:209px;height:32px;background:#0080ff;border-radius:2px;box-shadow:0 2px 0 rgba(5,145,255,0.12);"></div>
<div class="t" style="left:195.60px;top:372.67px;font-size:14px;color:#fff;">Configure mode and params</div>
<div class="abs" style="left:419px;top:362px;width:73px;height:32px;background:#fff;border:1px solid #d9d9d9;border-radius:2px;box-shadow:0 2px 0 rgba(0,0,0,0.016);"></div>
<div class="t" style="left:434.60px;top:372.67px;font-size:14px;color:#262626;transform:scaleX(0.9371);transform-origin:0 0;">Cancel</div>

</div>
<svg class="abs" style="left:0;top:0;z-index:40;pointer-events:none" width="1920" height="1080" viewBox="0 0 1920 1080">
  <path d="M816.2 613.3 L951 513.5 L948.6 506 L980.2 501.4 L965 529 L959.6 524.6 L818.5 616.7 Z" fill="#f24a46" stroke="#f24a46" stroke-width="1.6" stroke-linejoin="round"/>
</svg>

</body>
</html>
